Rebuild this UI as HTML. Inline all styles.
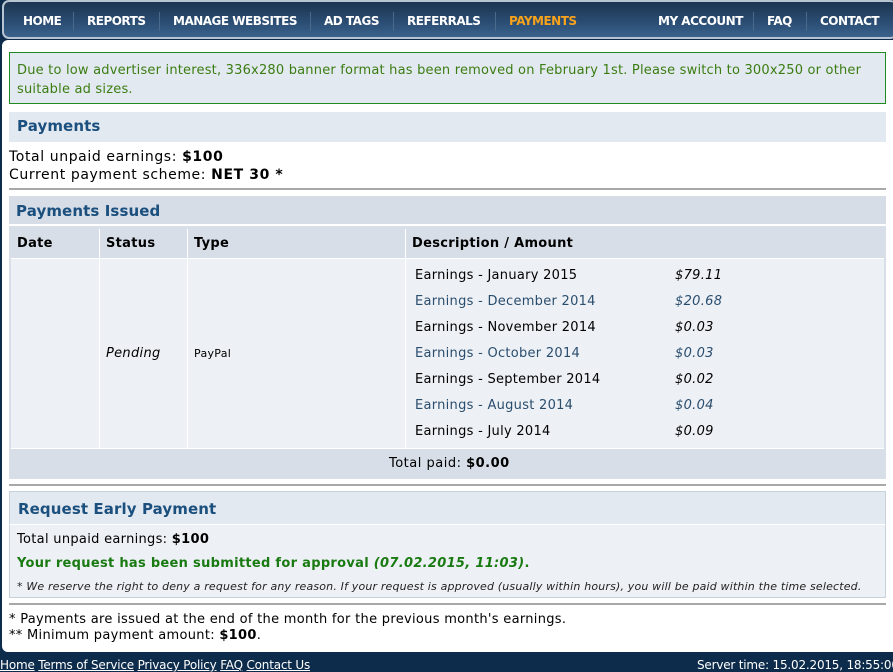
<!DOCTYPE html>
<html><head><meta charset="utf-8"><style>
*{margin:0;padding:0;box-sizing:border-box}
body{width:893px;height:672px;overflow:hidden;background:#0d2c4b;font-family:"DejaVu Sans","Liberation Sans",sans-serif;color:#000;position:relative}
.a{position:absolute;white-space:nowrap}
#nav{position:absolute;left:2px;top:0;width:895px;height:39px;border-radius:7px;background:linear-gradient(#1d3550,#2a4c72 55%,#3a628c);border:2px solid #b8c4d2;border-right:none}
#nav span{position:absolute;top:12px;color:#fff;font-weight:bold;font-size:12px;letter-spacing:-0.5px}
.sep{position:absolute;top:10px;width:1px;height:19px;background:#4a6a8c}
#panel{position:absolute;left:2px;top:40px;width:895px;height:612px;background:#fff;border-radius:6px 0 0 6px}
.box{position:absolute;left:9px;width:877px}
.hd{color:#1a4f7e;font-weight:bold;font-size:15px;letter-spacing:0.1px}
.t13{font-size:13px;letter-spacing:0.3px}
hr{position:absolute;left:9px;width:877px;border:none;border-top:2px solid #a8a8a8;height:0}
.col{position:absolute;top:229px;height:249px;width:1px;background:#fff}
.e{position:absolute;font-size:13px;letter-spacing:0.28px}
.e.b{color:#2a4d6e}
.m{position:absolute;left:675px;font-size:13px;font-style:italic;letter-spacing:0.3px}
.m.b{color:#2a4d6e}
#foot a{color:#fff;text-decoration:underline}
</style></head><body>
<div id="nav">
<span style="left:19px">HOME</span><div class="sep" style="left:69px"></div>
<span style="left:83px">REPORTS</span><div class="sep" style="left:155px"></div>
<span style="left:169px">MANAGE WEBSITES</span><div class="sep" style="left:306px"></div>
<span style="left:320px">AD TAGS</span><div class="sep" style="left:389px"></div>
<span style="left:403px">REFERRALS</span><div class="sep" style="left:491px"></div>
<span style="left:505px;color:#f7a21b">PAYMENTS</span>
<span style="left:654px">MY ACCOUNT</span><div class="sep" style="left:749px"></div>
<span style="left:763px">FAQ</span><div class="sep" style="left:802px"></div>
<span style="left:816px">CONTACT</span>
</div>
<div id="panel"></div>

<div class="box" style="top:52px;height:52px;background:#e3e9f0;border:1px solid #1f8a1f"></div>
<div class="a t13" style="left:17px;top:61px;color:#3b7d12;line-height:19px;letter-spacing:0.2px">Due to low advertiser interest, 336x280 banner format has been removed on February 1st. Please switch to 300x250 or other<br>suitable ad sizes.</div>

<div class="box" style="top:112px;height:30px;background:#e3e9f0"></div>
<div class="a hd" style="left:17px;top:117px">Payments</div>
<div class="a" style="left:9px;top:148px;font-size:14px;line-height:18px;letter-spacing:0.6px">Total unpaid earnings: <b>$100</b><br>Current payment scheme: <b>NET 30 *</b></div>
<hr style="top:188px">

<div class="box" style="top:196px;height:283px;background:#d9dfe8"></div>
<div class="box" style="top:196px;height:30px;background:#d6dde7;border-bottom:2px solid #fff"></div>
<div class="a hd" style="left:16px;top:202px">Payments Issued</div>
<div class="a" style="left:11px;top:229px;width:873px;height:29px;background:#d8dee8"></div>
<div class="a" style="left:11px;top:259px;width:873px;height:189px;background:#edf1f5"></div>
<div class="a" style="left:11px;top:449px;width:873px;height:28px;background:#d8dee8"></div>
<div class="a" style="left:11px;top:258px;width:873px;height:1px;background:#fff"></div>
<div class="a" style="left:11px;top:448px;width:873px;height:1px;background:#fff"></div>
<div class="col" style="left:99px;height:219px"></div><div class="col" style="left:187px;height:219px"></div><div class="col" style="left:405px;height:219px"></div>
<div class="a t13" style="left:17px;top:236px;font-weight:bold">Date</div>
<div class="a t13" style="left:106px;top:236px;font-weight:bold">Status</div>
<div class="a t13" style="left:194px;top:236px;font-weight:bold">Type</div>
<div class="a t13" style="left:412px;top:236px;font-weight:bold">Description / Amount</div>
<div class="a t13" style="left:106px;top:346px;font-style:italic">Pending</div>
<div class="a" style="left:194px;top:347px;font-size:11px;letter-spacing:0.3px">PayPal</div>
<div class="e" style="left:415px;top:268px">Earnings - January 2015</div><div class="m" style="top:268px">$79.11</div>
<div class="e b" style="left:415px;top:294px">Earnings - December 2014</div><div class="m b" style="top:294px">$20.68</div>
<div class="e" style="left:415px;top:320px">Earnings - November 2014</div><div class="m" style="top:320px">$0.03</div>
<div class="e b" style="left:415px;top:346px">Earnings - October 2014</div><div class="m b" style="top:346px">$0.03</div>
<div class="e" style="left:415px;top:372px">Earnings - September 2014</div><div class="m" style="top:372px">$0.02</div>
<div class="e b" style="left:415px;top:398px">Earnings - August 2014</div><div class="m b" style="top:398px">$0.04</div>
<div class="e" style="left:415px;top:424px">Earnings - July 2014</div><div class="m" style="top:424px">$0.09</div>
<div class="a t13" style="left:389px;top:456px;letter-spacing:0.5px">Total paid: <b>$0.00</b></div>
<hr style="top:484px">

<div class="box" style="top:491px;height:107px;background:#edf1f5;border:1px solid #c8d0da"></div>
<div class="box" style="top:491px;height:34px;background:#e3e9f0;border:1px solid #c8d0da;border-bottom:1px solid #fff"></div>
<div class="a hd" style="left:18px;top:500px">Request Early Payment</div>
<div class="a t13" style="left:17px;top:532px">Total unpaid earnings: <b>$100</b></div>
<div class="a t13" style="left:17px;top:556px;color:#1a7a12;font-weight:bold">Your request has been submitted for approval <i>(07.02.2015, 11:03)</i>.</div>
<div class="a" style="left:17px;top:580px;font-size:11px;font-style:italic;color:#222;letter-spacing:0.17px">* We reserve the right to deny a request for any reason. If your request is approved (usually within hours), you will be paid within the time selected.</div>
<hr style="top:603px">
<div class="a t13" style="left:9px;top:612px;line-height:16px">* Payments are issued at the end of the month for the previous month's earnings.<br>** Minimum payment amount: <b>$100</b>.</div>

<div id="foot" class="a" style="left:0;top:658px;font-size:12px;color:#fff;letter-spacing:-0.2px"><a>Home</a> <a>Terms of Service</a> <a>Privacy Policy</a> <a>FAQ</a> <a>Contact Us</a></div>
<div class="a" style="left:697px;top:658px;font-size:12px;color:#fff;letter-spacing:-0.2px">Server time: 15.02.2015, 18:55:00</div>
</body></html>
